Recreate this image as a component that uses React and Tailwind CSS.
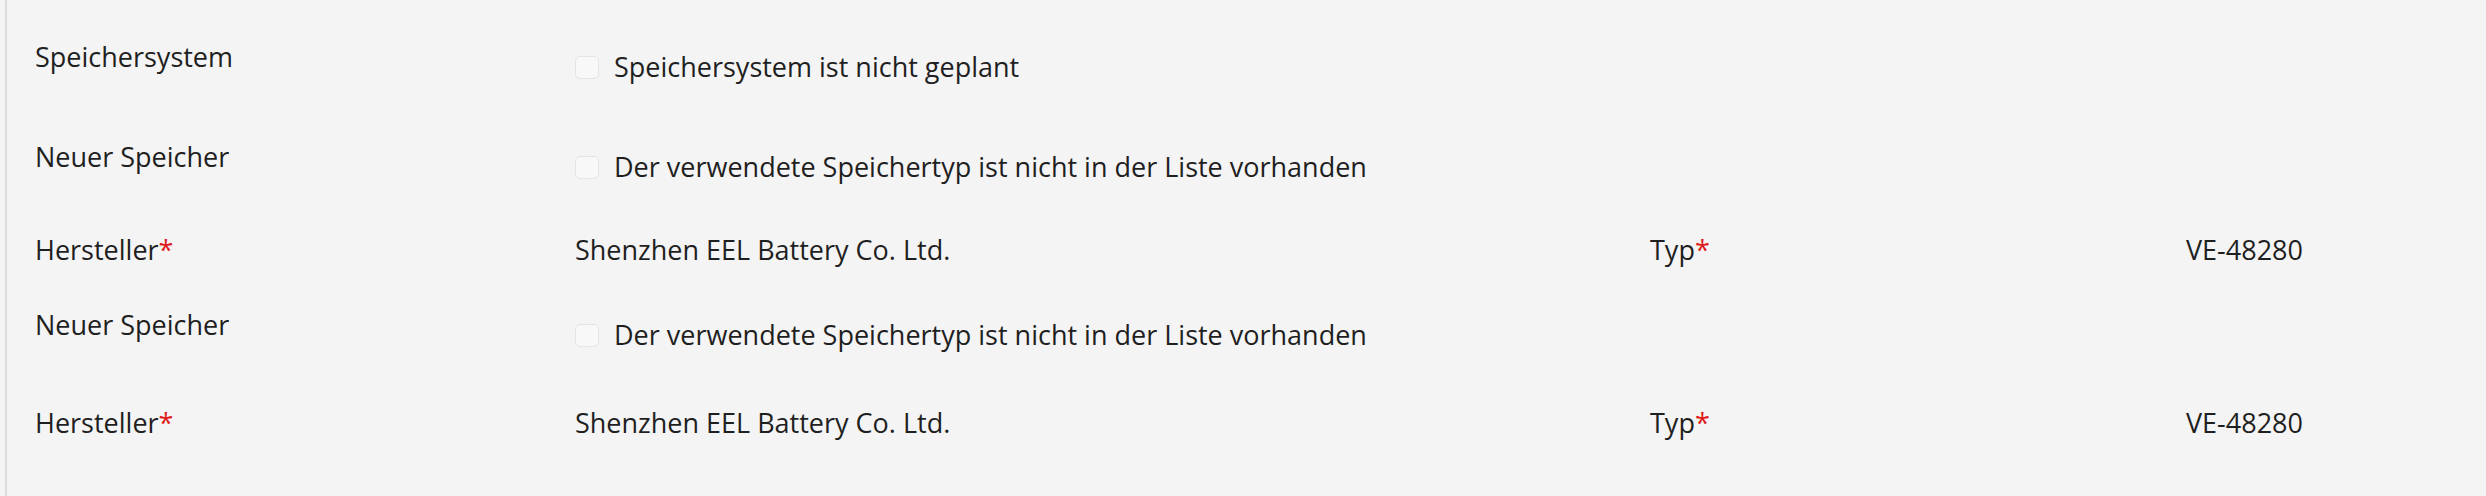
const Req = () => <span className="text-[#e0191b]">*</span>;

function Checkbox() {
  return <span className="inline-block w-[24px] h-[23px] shrink-0 rounded-[5px] border border-[#e4e4e4] bg-[#f8f8f8]" />;
}

function Row({ h, label, children, second }) {
  return (
    <div className={`flex items-start ${h}`}>
      <div className="w-[540px] shrink-0 leading-[40px]">{label}</div>
      {second ? (
        <>
          <div className="w-[1075px] shrink-0 leading-[40px]">{children}</div>
          <div className="w-[536px] shrink-0 leading-[40px]">{second.label}</div>
          <div className="leading-[40px]">{second.value}</div>
        </>
      ) : (
        <div className="mt-[10px] flex items-center gap-[15px] leading-[40px]">{children}</div>
      )}
    </div>
  );
}

export default function App() {
  return (
    <div className="w-[2486px] h-[496px] bg-[#f4f4f4] flex font-['Open_Sans',sans-serif] text-[27px] text-[#1f1f1f]">
      <div className="w-[5px] shrink-0" />
      <div className="w-[2px] shrink-0 bg-[#dcdcdc]" />
      <div className="flex-1 pl-[28px] pt-[37px]">
        <Row h="h-[100px]" label="Speichersystem">
          <Checkbox />
          <span>Speichersystem ist nicht geplant</span>
        </Row>
        <Row h="h-[93px]" label="Neuer Speicher">
          <Checkbox />
          <span>Der verwendete Speichertyp ist nicht in der Liste vorhanden</span>
        </Row>
        <Row h="h-[75px]" label={<>Hersteller<Req /></>} second={{ label: <>Typ<Req /></>, value: "VE-48280" }}>
          Shenzhen EEL Battery Co. Ltd.
        </Row>
        <Row h="h-[98px]" label="Neuer Speicher">
          <Checkbox />
          <span>Der verwendete Speichertyp ist nicht in der Liste vorhanden</span>
        </Row>
        <Row h="h-[60px]" label={<>Hersteller<Req /></>} second={{ label: <>Typ<Req /></>, value: "VE-48280" }}>
          Shenzhen EEL Battery Co. Ltd.
        </Row>
      </div>
    </div>
  );
}
